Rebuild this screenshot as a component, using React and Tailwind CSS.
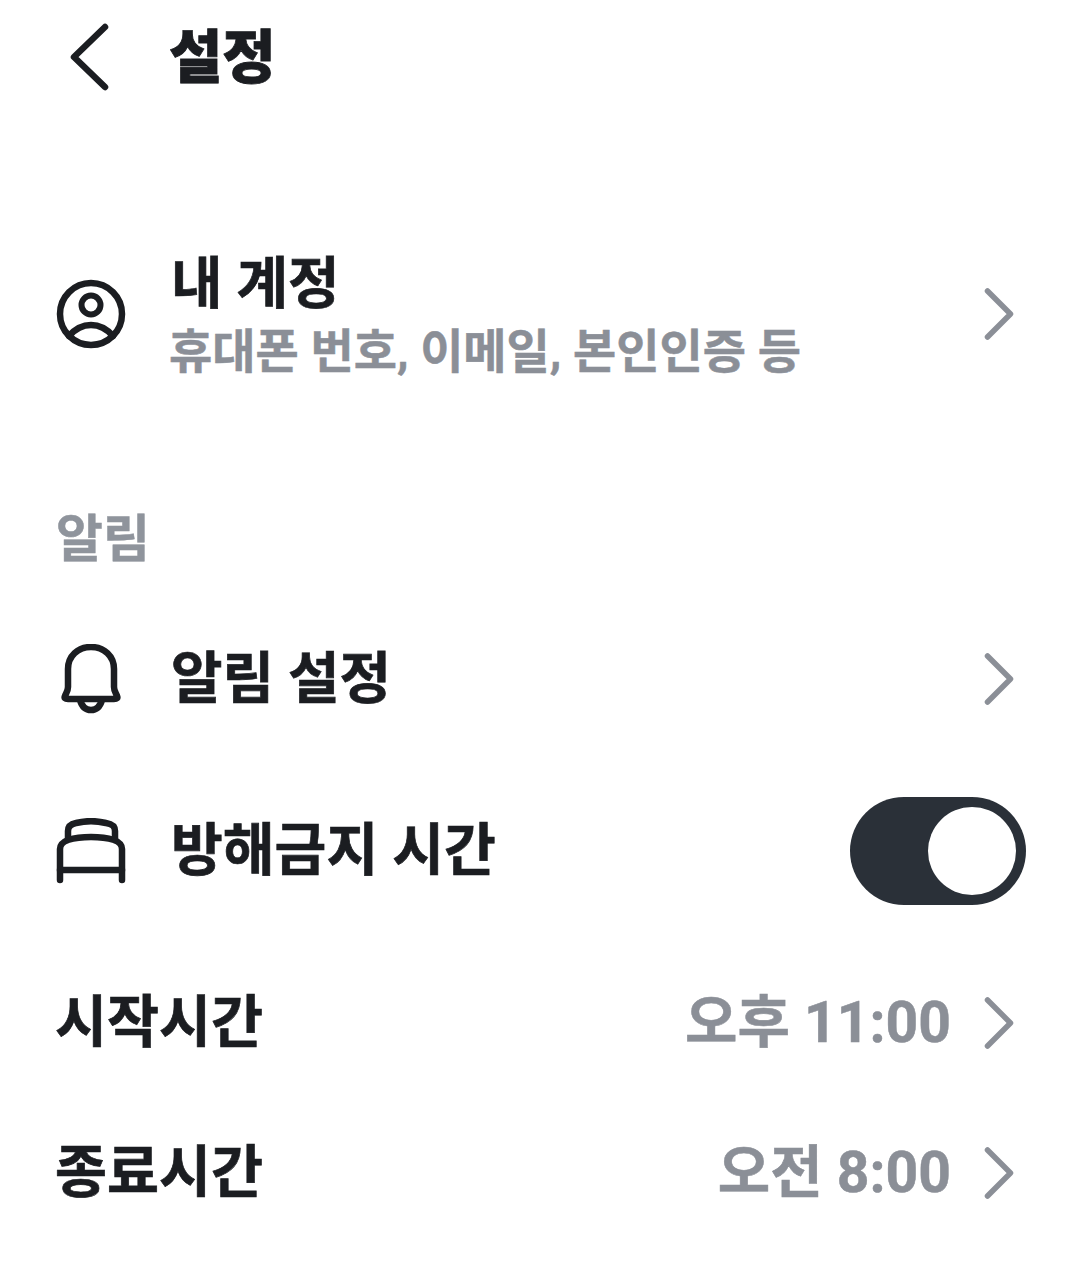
const FONT = 'font-["Roboto","Noto_Sans_CJK_KR",sans-serif]';

function Chevron({ className = "" }) {
  return (
    <svg width="30" height="52" viewBox="0 0 30 52" fill="none" className={className}>
      <path d="M3.5 3 L26.5 26 L3.5 49" stroke="#8b8f97" strokeWidth="5.5" strokeLinecap="round" strokeLinejoin="round" />
    </svg>
  );
}

function Label({ children, className = "text-[56px]" }) {
  return <span className={`leading-[64px] font-bold text-[#1b1d21] [-webkit-text-stroke:0.7px_#1b1d21] ${className}`}>{children}</span>;
}

function Value({ children }) {
  return <span className="text-[57px] leading-[64px] font-bold text-[#8b8f97] [-webkit-text-stroke:0.5px_#8b8f97] mr-[33px]">{children}</span>;
}

export default function App() {
  return (
    <div className={`${FONT} w-[1080px] h-[1267px] bg-white overflow-hidden pl-[56px] pr-[54px]`}>
      <header className="flex items-center h-[110px]">
        <div className="w-[114px] flex pl-[14px] mt-[4px]">
          <svg width="40" height="68" viewBox="0 0 40 68" fill="none">
            <path d="M35 4 L4 34 L35 64" stroke="#1b1d21" strokeWidth="6.5" strokeLinecap="round" strokeLinejoin="round" />
          </svg>
        </div>
        <h1 className="text-[58px] leading-[64px] font-black text-[#1b1d21] [-webkit-text-stroke:0.8px_#1b1d21] -ml-[1px] mt-[6px]">설정</h1>
      </header>

      <section className="flex items-center h-[132px] mt-[138px]">
        <div className="w-[116px] flex">
          <svg width="70" height="70" viewBox="0 0 70 70" fill="none" stroke="#1b1d21" strokeWidth="6.5">
            <circle cx="35" cy="35" r="31" />
            <circle cx="35" cy="26" r="9.5" strokeWidth="6" />
            <path d="M13 57 C20 49 27 46 35 46 C43 46 50 49 57 57" strokeLinecap="round" />
          </svg>
        </div>
        <div className="flex-1 flex flex-col">
          <Label className="text-[56px] leading-[60px] mt-[6px] -ml-[1px]">내 계정</Label>
          <span className="text-[47px] leading-[60px] font-bold text-[#8b8f97] [-webkit-text-stroke:0.5px_#8b8f97] mt-[6px] -ml-[3px]">휴대폰 번호, 이메일, 본인인증 등</span>
        </div>
        <Chevron className="mr-[12px]" />
      </section>

      <div className="h-[64px] mt-[128px] flex items-center text-[51px] font-bold text-[#8f949c] [-webkit-text-stroke:0.5px_#8f949c]">알림</div>

      <section className="flex items-center h-[80px] mt-[67px]">
        <div className="w-[116px] flex">
          <svg width="70" height="70" viewBox="0 0 70 70" fill="none" stroke="#1b1d21" strokeWidth="6.5" strokeLinecap="round" strokeLinejoin="round">
            <path d="M9 52 C10 49 12 47 12 43 V25 C12 12 22 3 35 3 C48 3 58 12 58 25 V43 C58 47 60 49 61 52 C62 54 61 55 58 55 H12 C9 55 8 54 9 52 Z" />
            <path d="M24 56 C26 63 30 66 35 66 C40 66 44 63 46 56" />
          </svg>
        </div>
        <Label className="text-[56px] flex-1 -ml-[1px]">알림 설정</Label>
        <Chevron className="mr-[12px]" />
      </section>

      <section className="flex items-center h-[108px] mt-[78px]">
        <div className="w-[116px] flex">
          <svg width="70" height="66" viewBox="0 0 70 66" fill="none" stroke="#1b1d21" strokeWidth="6.5" strokeLinecap="round" strokeLinejoin="round">
            <path d="M4 62 V31 C4 26 7 24 12 22 C25 18 45 18 58 22 C63 24 66 26 66 31 V62" />
            <path d="M12 21 V13 C12 8 15 6 20 5 C30 2.5 40 2.5 50 5 C56 6 59 8 59 13 V21" />
            <path d="M4 52 H66" />
          </svg>
        </div>
        <Label className="text-[56.3px] flex-1 -ml-[1px]">방해금지 시간</Label>
        <div className="w-[176px] h-[108px] rounded-full bg-[#2a3038] flex items-center justify-end pr-[10px]">
          <div className="w-[88px] h-[88px] rounded-full bg-white" />
        </div>
      </section>

      <section className="flex items-center h-[80px] mt-[78px]">
        <Label className="text-[56.5px] flex-1 -ml-[1px]">시작시간</Label>
        <Value>오후 11:00</Value>
        <Chevron className="mr-[12px]" />
      </section>

      <section className="flex items-center h-[80px] mt-[70px]">
        <Label className="text-[56.5px] flex-1 -ml-[1px]">종료시간</Label>
        <Value>오전 8:00</Value>
        <Chevron className="mr-[12px]" />
      </section>
    </div>
  );
}
